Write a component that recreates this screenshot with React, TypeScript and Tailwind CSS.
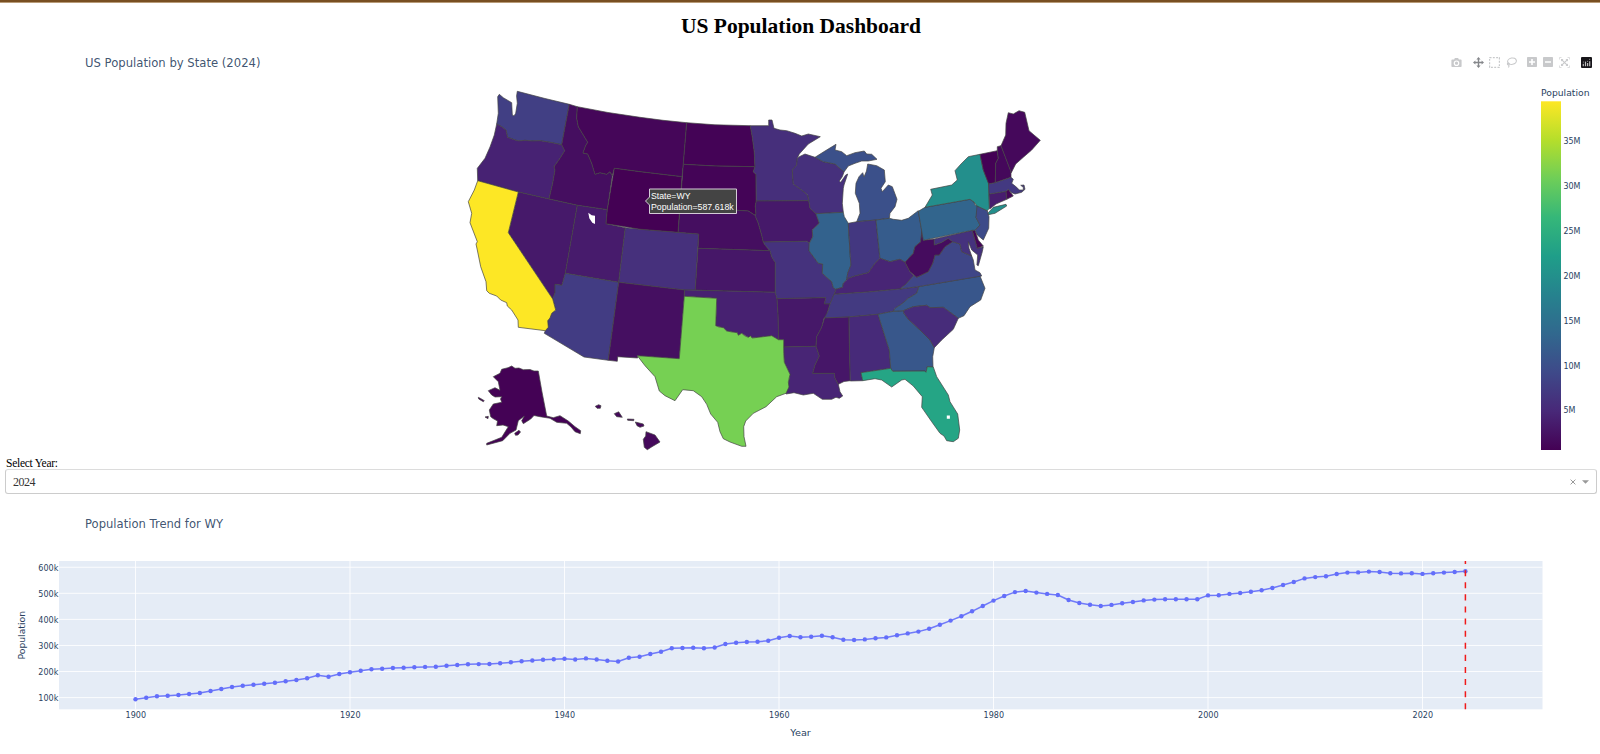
import React from "react";

type StateShape = { id: string; pop: number; rings: string[] };

const VIRIDIS = [
  [68, 1, 84], [72, 40, 120], [62, 73, 137], [49, 104, 142], [38, 130, 142],
  [31, 158, 137], [53, 183, 121], [110, 206, 88], [181, 222, 43], [253, 231, 37],
];
const MIN_POP = 0.588;
const MAX_POP = 39.43;

function popColor(pop: number): string {
  const t = ((pop - MIN_POP) / (MAX_POP - MIN_POP)) * (VIRIDIS.length - 1);
  const i = Math.min(Math.floor(t), VIRIDIS.length - 2);
  const f = t - i;
  const c = VIRIDIS[i].map((v, k) => Math.round(v + (VIRIDIS[i + 1][k] - v) * f));
  return `rgb(${c[0]},${c[1]},${c[2]})`;
}

const STATES: StateShape[] = [
  { id: "WA", pop: 7.96, rings: ["517.3,91.3 545,98.5 569.3,104.3 561.7,144.7 551,142.5 540,140.7 532,141 525,140.3 519,141 515,140 507.5,137.3 506,130 501.7,126.7 496.7,124 498.3,113.3 497.7,96.7 499.3,94.3 503.3,97.7 511.7,102.7 512.3,115 514,116 515.7,113.3 517.3,103.3 516.6,96"] },
  { id: "OR", pop: 4.27, rings: ["496.7,124 501.7,126.7 506,130 507.5,137.3 515,140 519,141 525,140.3 532,141 540,140.7 551,142.5 561.7,144.7 564.7,150.7 560,158.3 554,166.7 555,170 552.7,183.3 549,199 518.3,192 477.7,180.7 477.3,168.3 485,158.3 490,147 494.3,135"] },
  { id: "ID", pop: 2.0, rings: ["569.3,104.3 577.3,106.7 576.7,118.3 578.3,126.7 583.3,135 587.7,142.3 585.5,146 583,153 587.7,154 591.7,163.3 595,174.3 600,172.7 606.7,174.3 610,171.7 612.3,175.7 607.3,209.7 577.3,205.3 549,199 552.7,183.3 555,170 554,166.7 560,158.3 564.7,150.7 561.7,144.7"] },
  { id: "MT", pop: 1.14, rings: ["577.3,106.7 608,112.5 640,117.3 663,120.3 686.7,122.7 683.3,164.3 682,176.7 640,171.7 614.3,168.3 612.3,175.7 610,171.7 606.7,174.3 600,172.7 595,174.3 591.7,163.3 587.7,154 583,153 585.5,146 587.7,142.3 583.3,135 578.3,126.7 576.7,118.3"] },
  { id: "NV", pop: 3.27, rings: ["518.3,192 549,199 577.3,205.3 565.3,273.3 562,285.3 555,284.3 555,292.7 552.7,299 508.3,232.7"] },
  { id: "UT", pop: 3.5, rings: ["577.3,205.3 607.3,209.7 606,223.7 625.3,227.7 618.7,282.3 565.3,273.3"] },
  { id: "CO", pop: 5.96, rings: ["625.3,227.7 640,229.2 678,232.3 698.7,234 697.7,250 695.3,290.2 684,290 618.7,282.3"] },
  { id: "AZ", pop: 7.58, rings: ["565.3,273.3 618.7,282.3 608.3,360.3 584,357 544.3,333.3 545.3,330.7 547.7,327.3 547.7,320.7 551.7,313.3 555.7,310 552.7,299 555,292.7 555,284.3 562,285.3"] },
  { id: "NM", pop: 2.13, rings: ["618.7,282.3 684.5,290 684.3,296.3 679.3,358.7 637.3,355.7 637.7,358 617.7,356.7 617.3,361.3 608.3,360.3"] },
  { id: "ND", pop: 0.797, rings: ["686.7,122.7 715,124.8 750.3,125.7 752.3,136.7 754.3,151.7 755,166.7 715,166 683.3,164.3"] },
  { id: "SD", pop: 0.925, rings: ["683.3,164.3 715,166 755,166.7 753.3,171.7 756,174.3 756.3,201 755.3,206 756,214 755,215.3 748.3,211 736.7,210.3 680,208.3"] },
  { id: "NE", pop: 2.01, rings: ["680,208.3 736.7,210.3 748.3,211 755,215.3 758.3,223.3 761.7,235 763.3,242 765,245 770,250.7 698,248.3 698.7,234 678,232.3"] },
  { id: "KS", pop: 2.97, rings: ["698,248.3 770,250.7 771.7,256.7 775.3,262.7 775.3,292.3 695.3,290.2"] },
  { id: "OK", pop: 4.1, rings: ["684.5,290 695.3,290.2 775.3,292.3 777,298.7 778,313.3 778.7,339.7 771.7,335.7 763.3,336.7 755,337.7 748.3,337.3 741.7,333.3 738.3,335.3 737.3,332.7 726.7,331 723.3,327.7 715.7,325.7 716.7,298.3 684.3,296.3"] },
  { id: "MN", pop: 5.79, rings: ["750.3,125.7 768.7,125.7 768.7,120 772,120 774,128.3 780,130 786.7,130.7 795,133.3 801.7,136 808.3,134 820.3,136.7 808.3,144 799.3,154 797.3,158.3 796.7,165 792.3,170 793.3,184 801.7,190 807.7,195 808.8,200.7 756.3,201 756,174.3 753.3,171.7 755,166.7 754.3,151.7 752.3,136.7"] },
  { id: "IA", pop: 3.24, rings: ["756.3,201 808.8,200.7 810,208.3 816,213.7 819.3,223.3 812.3,230 812.7,236.7 809.3,243.3 806.7,241.3 763.3,242 761.7,235 758.3,223.3 755,215.3 756,214 755.3,206"] },
  { id: "MO", pop: 6.25, rings: ["763.3,242 806.7,241.3 809.3,243.3 809,250.7 818.3,263.3 822.7,264 822.3,273.3 831.7,281.7 833.3,287.7 836,289.3 834.3,294.3 830,304 824.3,304 825.7,297.7 777,298.7 775.3,292.3 775.3,262.7 771.7,256.7 770,250.7 765,245"] },
  { id: "AR", pop: 3.09, rings: ["777,298.7 825.7,297.7 824.3,304 830,304 826.7,315 824,318.3 821.7,327.3 816.7,336.7 816,346.3 783.5,347 783.7,339.7 778.7,339.7 778,313.3"] },
  { id: "LA", pop: 4.6, rings: ["783.5,347 816,346.3 819.3,356 815,365 812.7,373.3 834.3,373.3 835,378.3 838.3,384.3 840,391.7 842.7,396 839.3,398.3 836,397.3 831.7,399.3 822.3,399.3 813.3,393.3 803.3,395 794,392.7 786,394 789,380 790,374.3 784.3,362.3"] },
  { id: "WI", pop: 5.96, rings: ["797.3,158.3 799.3,156.7 805,154 815,157.3 823.3,161.7 835,164 840,168.3 844,172 842.3,176.7 839.3,181 840.7,182.3 845.7,175 847.7,174 844,185 843.3,188.3 842.3,203.3 843.3,212.3 816,213.7 810,208.3 808.8,200.7 807.7,195 801.7,190 793.3,184 792.3,170 796.7,165"] },
  { id: "MI", pop: 10.14, rings: ["815,157.3 825,151 836,144.3 835,150 841.7,151.7 846.7,155.7 855,152.7 864.3,151 866.7,154 871.7,154.3 877,159.3 868.3,161 861.7,161 855,163.3 848.3,166 844,172 840,168.3 835,164 823.3,161.7", "867.7,164 876.7,165.7 884.3,170 885.3,181.7 881,188.3 882.3,191.7 888.3,185 892.3,186.7 897,199.3 895,206.7 890,213.3 889.3,218.3 876,220 856.7,221.7 860,213.3 859.3,203.3 855.3,193.3 856,183.3 859,176.7 862.7,172.7 864,177 866.5,171"] },
  { id: "IL", pop: 12.71, rings: ["816,213.7 843.3,212.3 844.3,216.7 848.3,223.3 850.3,256.7 851,265 847.7,273.3 846.7,280 843.3,283.3 842.7,287.3 836,289.3 833.3,287.7 831.7,281.7 822.3,273.3 822.7,264 818.3,263.3 809,250.7 809.3,243.3 812.7,236.7 812.3,230 819.3,223.3"] },
  { id: "IN", pop: 6.92, rings: ["848.3,223.3 856.7,221.7 876,220 879.7,255.7 880,258.3 875,263.3 868.3,272.7 855,276 848.3,278.3 846.7,280 847.7,273.3 851,265 850.3,256.7"] },
  { id: "OH", pop: 11.88, rings: ["876,220 889.3,218.3 893.3,219.3 901.7,220.3 908.3,218.3 918.3,210.7 922,231.7 920.7,241.7 915,246.7 913.3,253.3 905,262.3 900,259.3 890,261.7 880,258.3 879.7,255.7"] },
  { id: "KY", pop: 4.59, rings: ["834.3,294.3 836,289.3 842.7,287.3 843.3,283.3 846.7,280 848.3,278.3 855,276 868.3,272.7 875,263.3 880,258.3 890,261.7 900,259.3 905,262.3 910,271.7 914,275.5 905,285 900,289 868,292"] },
  { id: "TN", pop: 7.23, rings: ["834,294.3 868,292 900,289 919,286.5 916.7,293.3 908.3,298.3 901.7,304 895,308.3 893.3,311.3 878,314.3 849,317 824.5,318 828,311 830,304"] },
  { id: "MS", pop: 2.94, rings: ["824.5,318 849,317 849.5,350 850.3,380.7 844,381.5 838.3,384.3 835,378.3 834.3,373.3 812.7,373.3 815,365 819.3,356 816,346.3 816.7,336.7 821.7,327.3"] },
  { id: "AL", pop: 5.16, rings: ["849,317 878,314.3 889.3,350 890.7,368.3 861,372.7 862.7,380.7 850.3,381 849.5,350"] },
  { id: "GA", pop: 11.18, rings: ["878,314.3 893.3,311.3 903.5,310.7 904,313.3 908.3,319.3 920,330 930,340 934.3,347.7 932.7,356.7 933,367 927.3,366.7 926,372 925,371 892.7,371.3 890.7,368.3 889.3,350"] },
  { id: "FL", pop: 23.37, rings: ["861,372.7 890.7,368.3 892.7,371.3 925,371 926,372.3 927.3,366.7 933.3,367 936.7,376.7 948.3,395 950,401.7 957.7,414 959.7,430 958.3,438.3 953.3,441.7 946.7,440.7 944,436 940,433.3 931.7,421.7 921.7,407.3 922.3,396.7 913.3,386 905,379.3 901.7,380 891.7,387 881.7,380 875,378.7 862.7,380.7"] },
  { id: "NC", pop: 11.05, rings: ["919,286.5 980,276 985,288.3 980.7,300 970,306.7 964,315.7 958.3,318.3 943.3,307.3 930,307.7 926.7,305.3 913.3,306.7 903.5,310.7 893.3,311.3 895,308.3 901.7,304 908.3,298.3 916.7,293.3"] },
  { id: "SC", pop: 5.48, rings: ["903.5,310.7 913.3,306.7 926.7,305.3 930,307.7 943.3,307.3 958.3,318.3 953.3,329.3 941.7,340 934.3,347.7 930,340 920,330 908.3,319.3 904,313.3"] },
  { id: "VA", pop: 8.81, rings: ["916.7,277.3 928.3,271.7 932.7,263.3 935,255 939.3,255 945,246.7 952.7,241.7 960,244 961.7,251.7 971.7,256 973.3,260 975,270 980,272.7 981.7,276 919,286.5 900,289 905,285 914,275.5"] },
  { id: "WV", pop: 1.77, rings: ["922,228.3 923.3,240.3 934.3,239 934.3,245 941.7,242.3 948.3,238.3 952.7,241.7 945,246.7 939.3,255 935,255 932.7,263.3 928.3,271.7 916.7,277.3 910,271.7 905,262.3 913.3,253.3 915,246.7 920.7,241.7"] },
  { id: "MD", pop: 6.26, rings: ["934.3,239 972.3,230.3 977.3,248.3 983.3,246.7 982.3,251.7 978.3,265.7 976.9,265 977.7,255 971.7,250 968.3,241.7 969,248.3 971.7,256 961.7,251.7 960,244 952.7,241.7 948.3,238.3 941.7,242.3 934.3,245"] },
  { id: "DE", pop: 1.05, rings: ["972.3,230.3 975,230.3 978.3,240 983.3,246 977.3,248.3"] },
  { id: "PA", pop: 13.08, rings: ["925,207.3 970,199.3 974,202 975,205 979,206.7 976,217.3 980,225 975,230.3 972.3,230.3 923.3,240.3 918.3,211.3"] },
  { id: "NJ", pop: 9.5, rings: ["977,206 987.3,210.7 989,216.7 988.7,228.3 983.3,240 977.3,235 975,230.3 980,225 976,217.3"] },
  { id: "NY", pop: 19.87, rings: ["980,154.3 983.3,170 988.7,183.3 989.3,208.3 987.3,210.7 977,206 974,202 970,199.3 925,207.3 932.3,195 930.7,189.3 951.7,185 957.3,180 955,170.7 961,164 968.3,156.7", "988.3,212.7 993.3,207.3 1006,204.3 1006.7,206 995,213.3 988.3,214.7"] },
  { id: "VT", pop: 0.648, rings: ["980,154.3 997.3,150.7 998.3,158.3 995.7,163.3 995.3,182.7 988.7,184 983.3,170"] },
  { id: "NH", pop: 1.41, rings: ["997.3,150.7 997.3,146.7 1001,145.7 1011,171.7 1011,177.3 995.3,182.7 995.7,163.3 998.3,158.3"] },
  { id: "ME", pop: 1.41, rings: ["1001,145.7 1005.7,135 1006,123.3 1008.3,112.7 1013.3,114 1019,110.7 1024.7,112.3 1029,130.7 1034,135 1040.3,140.3 1031.7,150 1023.3,157.3 1015.7,164 1011.3,172.7"] },
  { id: "CT", pop: 3.68, rings: ["989,194 1006,191.3 1006.7,199.3 996,204 989.7,209"] },
  { id: "RI", pop: 1.11, rings: ["1006,191.3 1008.3,189.3 1013.3,196 1006.7,199.3"] },
  { id: "MA", pop: 7.14, rings: ["988.5,184 995.3,182.7 1011,177.3 1013.3,179.3 1011.7,183.3 1016.7,187.3 1019.3,190 1023.3,190 1023.3,187.3 1020.7,185.3 1024,185 1025,189.3 1021.7,192.3 1015,194 1011.7,192.7 1008.3,189.3 1006,191.3 989,194"] },
  { id: "TX", pop: 31.29, rings: ["684.3,296.3 716.7,298.3 715.7,325.7 719,327 723.3,327.7 726.7,331 732,332 737.3,332.7 738.3,335.3 741.7,333.3 745,336 748.3,337.3 750.7,335.7 752,338 755,337.7 763.3,336.7 771.7,335.7 778.3,339.7 783.7,339.7 783.7,353.3 784.3,362.3 790,374.3 788.3,382 789,387 786,393.3 776.7,396.7 766,406.7 753.3,413.3 745.7,421 743.7,426.7 744,436.7 746,446.3 741.7,446.3 730,442 723.3,438.7 720,431.7 717.7,422.3 710.7,414 706.7,404.3 701.7,396.7 693.3,390.7 682.7,389.7 675,400.7 665,395.7 659.3,391 655,376.7 645,365.7 637.3,355.7 679.3,358.7"] },
  { id: "CA", pop: 39.43, rings: ["477.7,180.7 518.3,192 508.3,232.7 552.7,299 555.7,310 551.7,313.3 550,318 547.7,320.7 548.3,327.3 545.3,330.7 518.3,327.3 518,320 511.7,310 507.3,306 506.7,302.7 500.7,300 496.7,296 489.3,293.3 486.7,290.7 486,281.7 480.7,266.7 477.3,250 476,244 477.3,241.7 470,222.7 471.7,213.3 468.3,201.7 474.3,190"] },
  { id: "WY", pop: 0.588, rings: ["614.3,168.3 640,171.7 682,176.7 678,232.3 640,229.2 606,223.7 607.3,209.7"] },
  { id: "AK", pop: 0.74, rings: [
    "511.7,366 515,368.3 519,368 523.3,369.7 530,369.5 534,371 538.3,371 542,392 546.7,416 553.3,417.7 560,415.7 568.3,421 575,426.7 580.7,430.7 580.3,433.7 575,431.7 571,427 566.7,423.3 556.7,422.3 550,418.3 540,416.7 534,415.5 530.7,419 523.3,423.7 521.7,420.7 524.3,416 518.3,420.7 516,430 510,433.3 502.7,440.7 486.7,445 486.7,443.3 495,440 501.7,437.3 508.3,426.7 503,425 496.7,425.7 497.5,421 493,418.5 490.7,416.7 489.3,410 493.3,404 501.7,402.3 500.5,399 501.7,396.7 495,397 491.7,395 488.3,390.7 495,387.7 500,390.3 498.3,381.7 493.3,376.7 500,373.3 501.7,369.3 508,367.7",
    "478.3,397.3 481,398.7 484.3,400.7 483.3,401.7 478.7,399",
    "485,417 488.3,416.3 488,418.7",
    "514.7,433.3 519,430.3 520.5,432 518,435 515.5,435.3",
  ] },
  { id: "HI", pop: 1.45, rings: [
    "595.3,406.3 598.7,404.7 601,405.7 600.3,408.3 597,408.3",
    "614.3,413.7 618.7,411.8 622.3,417.3 616.7,416.7",
    "627.3,419 634,419.3 633.7,420.7 627.7,420.3",
    "635.3,422 643.3,424 644,426 640,427.3 637,425.7",
    "646,431.7 655,435 660,442 652,446.7 647.3,449.7 644.3,447.3 643.3,439.3 645.7,436",
  ] },
];

// Great Salt Lake and Lake Okeechobee
const LAKES = [
  "588.3,212.7 591.7,215.2 595,215.7 595,224 592.3,222.7 589.3,218.3",
  "946.8,415.5 949.9,415.5 949.9,418.7 946.8,418.7",
];

const SCALE_TICKS = [35, 30, 25, 20, 15, 10, 5];

// Vertical chart position of Wyoming's population, one entry per year from 1900 on
const TREND_Y = [
  699.3, 697.7, 696.3, 695.7, 695, 694, 693, 691, 689, 687, 685.7, 684.7, 683.7, 682.7, 681.3, 680,
  678.3, 675.3, 676.7, 674, 672.3, 670.7, 669.3, 668.7, 668, 667.7, 667.3, 666.9, 666.7, 665.7, 665,
  664.3, 664.1, 664, 663.3, 662.3, 661.3, 660.5, 659.7, 659.3, 658.7, 659.5, 658.4, 659.5, 660.7, 661.5,
  657.7, 656.7, 654, 651.7, 648.3, 648, 647.7, 648.3, 647.5, 644, 642.7, 642, 641.8, 640.7, 637.7, 636,
  637.2, 636.7, 635.8, 637.3, 639.8, 640, 639.4, 638.3, 637.4, 635.3, 633.4, 631.6, 628.7, 624.7,
  620.6, 616.3, 611.3, 606, 600.6, 596, 592.1, 591, 592.6, 593.9, 595, 600, 603, 604.7, 606, 604.9,
  603.3, 602, 600.4, 599.6, 599.2, 599.2, 599.2, 599.2, 595.4, 595.3, 593.9, 593, 591.7, 590.3, 588,
  585, 582, 578.4, 577.1, 576.3, 574, 572.6, 572.4, 571.6, 572, 573.2, 573.4, 573.3, 573.9, 573.3,
  572.6, 572, 571.3,
];
const yearX = (year: number) => 135.5 + (year - 1900) * 10.725;
const valueY = (k: number) => 697.6 - (k - 100) * 0.2607;

const toPath = (ring: string) => `M${ring.split(" ").join("L")}Z`;

function ModeBar() {
  return (
    <div className="flex h-3 items-center text-[#c8c9cb]">
      <svg className="mr-[11px] h-[11px] w-[11px]" viewBox="0 0 11 11" fill="currentColor">
        <path fillRule="evenodd" d="M1.2 2.5h1.9l.8-1.6h3.2l.8 1.6h1.9q.8 0 .8.8v6q0 .8-.8.8H1.2q-.8 0-.8-.8v-6q0-.8.8-.8zM5.5 3.4a2.8 2.8 0 1 0 0 5.6 2.8 2.8 0 0 0 0-5.6zm0 1.200a1.600 1.600 0 1 1 0 3.200 1.600 1.600 0 0 1 0-3.200z" />
      </svg>
      <svg className="mr-[5px] h-[11px] w-[11px] text-[#85878b]" viewBox="0 0 11 11" fill="currentColor">
        <path d="M5.5 0l2.1 2.4H6.2v2.4h2.4V3.4L11 5.5 8.6 7.6V6.2H6.2v2.4h1.4L5.5 11 3.4 8.6h1.4V6.2H2.4v1.4L0 5.5l2.4-2.1v1.4h2.4V2.4H3.4z" />
      </svg>
      <svg className="mr-[6px] h-[11px] w-[11px]" viewBox="0 0 11 11" fill="none" stroke="currentColor" strokeWidth="1.2">
        <path strokeDasharray="1.9 1.366" d="M.6.6h9.8v9.8H.6z" />
      </svg>
      <svg className="mr-[10px] h-[11px] w-[11px]" viewBox="0 0 11 11" fill="none" stroke="currentColor" strokeWidth="1.1">
        <ellipse cx="6" cy="4.2" rx="4.4" ry="3.2" transform="rotate(-12 6 4.2)" />
        <path d="M3 6.2q-1.700-.3-1.600 .9 .4 1.100 1.600 .6Q3.600 6.800 3 6.200M2.600 7.800q.9 1-.1 2.700" />
      </svg>
      <svg className="mr-[6px] h-[10px] w-[10px]" viewBox="0 0 10 10" fill="currentColor">
        <path fillRule="evenodd" d="M.8 0h8.400q.8 0 .8.8v8.400q0 .8-.8.8H.8q-.8 0-.8-.8V.8Q0 0 .8 0zM4.200 2v2.200H2v1.600h2.200V8h1.600V5.800H8V4.200H5.800V2z" />
      </svg>
      <svg className="mr-[6px] h-[10px] w-[10px]" viewBox="0 0 10 10" fill="currentColor">
        <path fillRule="evenodd" d="M.8 0h8.400q.8 0 .8.8v8.400q0 .8-.8.8H.8q-.8 0-.8-.8V.8Q0 0 .8 0zM2 4.200v1.600h6V4.200z" />
      </svg>
      <svg className="mr-[11px] h-[11px] w-[11px]" viewBox="0 0 11 11" fill="none" stroke="currentColor">
        <path strokeWidth="1" strokeOpacity=".6" d="M.5 2.500v-2h2M8.500.5h2v2M10.500 8.500v2h-2M2.500 10.500h-2v-2" />
        <path strokeWidth="1.100" d="M2.300 2.300l6.400 6.400M8.700 2.300L2.300 8.700" />
        <path fill="currentColor" stroke="none" d="M2 2h2.500L2 4.500zM9 2v2.500L6.500 2zM9 9H6.500L9 6.500zM2 9V6.500L4.500 9z" />
      </svg>
      <svg className="h-[11px] w-[11px]" viewBox="0 0 11 11">
        <rect width="11" height="11" rx="1" fill="#17151a" />
        <g fill="#bbb">
          <rect x="1.700" y="6.800" width="1.200" height="2.400" />
          <rect x="3.900" y="4.600" width="1.200" height="4.600" />
          <rect x="6" y="6" width="1.200" height="3.200" />
          <rect x="8.100" y="4.200" width="1.200" height="5" />
          <circle cx="2.300" cy="5.100" r=".5" />
          <circle cx="6.600" cy="4.200" r=".5" />
          <circle cx="8.700" cy="2.300" r=".5" />
        </g>
      </svg>
    </div>
  );
}

function PopulationMap() {
  return (
    <svg className="block h-[366px] w-[1600px] font-['DejaVu_Sans',sans-serif]" viewBox="0 79 1600 366" overflow="visible">
      <defs>
        <linearGradient id="viridis" x1="0" y1="1" x2="0" y2="0">
          {VIRIDIS.map((c, i) => (
            <stop key={i} offset={i / (VIRIDIS.length - 1)} stopColor={`rgb(${c[0]},${c[1]},${c[2]})`} />
          ))}
        </linearGradient>
      </defs>
      <g stroke="#444" strokeWidth="0.7" strokeLinejoin="round">
        {STATES.map((s) => (
          <path key={s.id} fill={popColor(s.pop)} d={s.rings.map(toPath).join("")} />
        ))}
      </g>
      <path d={LAKES.map(toPath).join("")} fill="#fff" />
      <g>
        <path d="M649.500 189h87v24.500h-87v-8.500l-4-4 4-4z" fill="#444" stroke="#d5ccd8" strokeWidth="1" />
        <g fill="#fff" fontSize="8.800" className="font-['Liberation_Sans',Arial,sans-serif]">
          <text x="651" y="198.700" textLength="39.500" lengthAdjust="spacingAndGlyphs">State=WY</text>
          <text x="651" y="209.700" textLength="82.700" lengthAdjust="spacingAndGlyphs">Population=587.618k</text>
        </g>
      </g>
      <rect x="1541" y="101.300" width="20" height="348.700" fill="url(#viridis)" />
      <g fill="#2a3f5f">
        <text x="1541" y="96" fontSize="9.200" textLength="48.500" lengthAdjust="spacingAndGlyphs">Population</text>
        {SCALE_TICKS.map((m, i) => (
          <text key={m} x="1563.500" y={144 + i * 44.9} fontSize="8.200" textLength={m === 5 ? 12 : 17} lengthAdjust="spacingAndGlyphs">
            {m}M
          </text>
        ))}
      </g>
    </svg>
  );
}

function TrendChart() {
  const line = TREND_Y.map((y, i) => `${yearX(1900 + i)},${y}`).join(" ");
  return (
    <svg className="block h-[254px] w-[1600px] font-['DejaVu_Sans',sans-serif]" viewBox="0 500 1600 254" fill="#2a3f5f">
      <text x="85" y="527.600" fontSize="12.600" fillOpacity=".9" textLength="138" lengthAdjust="spacingAndGlyphs">Population Trend for WY</text>
      <rect x="59" y="561" width="1483.500" height="148.300" fill="#e5ecf6" />
      <g stroke="#fff" strokeWidth="1" strokeOpacity=".85">
        {[1900, 1920, 1940, 1960, 1980, 2000, 2020].map((yr) => (
          <line key={yr} x1={yearX(yr)} x2={yearX(yr)} y1="561" y2="709.300" />
        ))}
        {[100, 200, 300, 400, 500, 600].map((k) => (
          <line key={k} x1="59" x2="1542.500" y1={valueY(k)} y2={valueY(k)} />
        ))}
      </g>
      <g fontSize="8.400">
        {[1900, 1920, 1940, 1960, 1980, 2000, 2020].map((yr) => (
          <text key={yr} x={yearX(yr) - 9.9} y="718.200" textLength="20.500" lengthAdjust="spacingAndGlyphs">{yr}</text>
        ))}
        {[100, 200, 300, 400, 500, 600].map((k) => (
          <text key={k} x="38.300" y={valueY(k) + 3.3} textLength="20" lengthAdjust="spacingAndGlyphs">{k}k</text>
        ))}
      </g>
      <polyline points={line} fill="none" stroke="#636efa" strokeOpacity=".9" strokeWidth="1.500" strokeLinejoin="round" />
      <g fill="#636efa">
        {TREND_Y.map((y, i) => (
          <circle key={i} cx={yearX(1900 + i)} cy={y} r="2.200" />
        ))}
      </g>
      <line x1="1465.400" x2="1465.400" y1="709.300" y2="561" stroke="#f01a1a" strokeWidth="1.500" strokeDasharray="6.050 6.050" />
      <g fontSize="9.300">
        <text x="790.300" y="736.200" textLength="20.500" lengthAdjust="spacingAndGlyphs">Year</text>
        <text transform="translate(25.300 659.500) rotate(-90)" textLength="48.500" lengthAdjust="spacingAndGlyphs">Population</text>
      </g>
    </svg>
  );
}

function YearSelect() {
  return (
    <section className="flex h-[55px] flex-col pt-[11px] pr-[3px] pl-[5px] font-['Liberation_Serif','Times_New_Roman',serif] text-[11.500px]">
      <label className="flex h-[13px] items-center pl-px leading-3 tracking-[-0.27px] text-black">Select Year:</label>
      <div className="flex h-[25px] w-full items-center justify-between rounded-[3px] border border-[#ccc] border-t-[#dcdcdc] bg-white px-[7px] text-[#333]">
        <span className="text-[12px] leading-none tracking-[-0.5px]">2024</span>
        <span className="flex items-center gap-[6px] text-[#999]">
          <svg className="h-[6px] w-[6px]" viewBox="0 0 6 6" stroke="currentColor" strokeWidth="1">
            <path d="M.6.6l4.800 4.800M5.400.6L.6 5.400" />
          </svg>
          <svg className="h-[4px] w-[7px]" viewBox="0 0 7 4" fill="currentColor">
            <path d="M0 .3h7L3.500 3.800z" />
          </svg>
        </span>
      </div>
    </section>
  );
}

export default function App() {
  return (
    <main className="flex h-[754px] w-[1600px] flex-col overflow-hidden bg-white">
      <div className="h-[3px] shrink-0 border-b border-[#b89b78] bg-[#784f22]" />
      <h1 className="flex h-[46px] shrink-0 items-center justify-center pl-[2px] font-['Liberation_Serif','Times_New_Roman',serif] text-[21.500px] font-bold text-black">
        US Population Dashboard
      </h1>
      <header className="flex h-[30px] shrink-0 items-start justify-between pt-[7px] pr-2 pl-[85px]">
        <svg className="h-4 w-[180px] overflow-visible font-['DejaVu_Sans',sans-serif]" viewBox="0 0 180 16">
          <text x="0" y="10.600" fontSize="12.600" fill="#2a3f5f" fillOpacity=".9" textLength="175.500" lengthAdjust="spacingAndGlyphs">US Population by State (2024)</text>
        </svg>
        <ModeBar />
      </header>
      <PopulationMap />
      <YearSelect />
      <TrendChart />
    </main>
  );
}
